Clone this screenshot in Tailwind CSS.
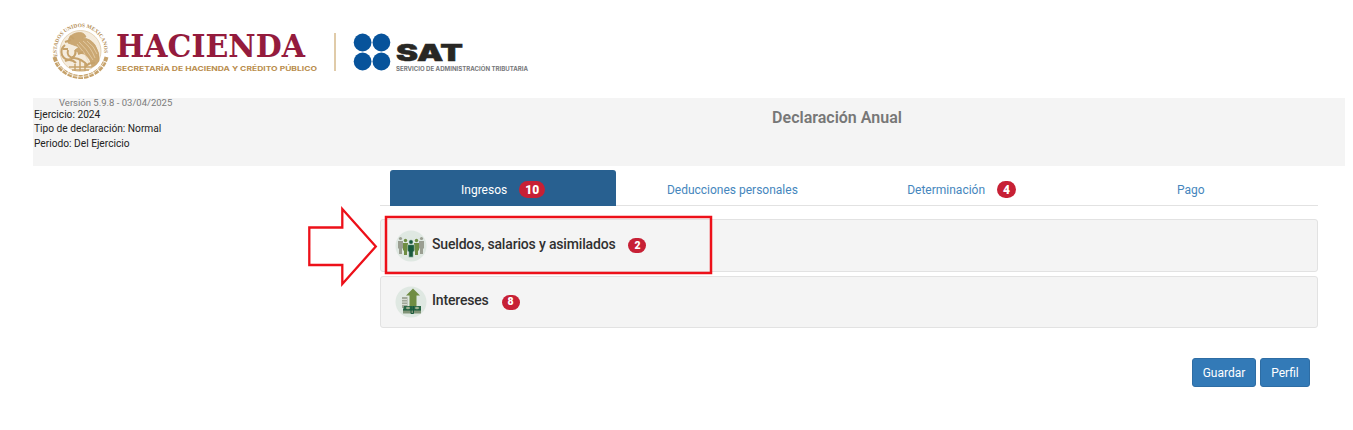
<!DOCTYPE html>
<html lang="es">
<head>
    <meta charset="UTF-8">
    <meta name="viewport" content="width=device-width, initial-scale=1.0">
    <title>Declaración Anual</title>
    <script src="https://cdn.jsdelivr.net/npm/@tailwindcss/browser@4"></script>
</head>
<body class="relative h-[430px] overflow-hidden bg-white font-[Roboto,sans-serif] text-[#333]">
    <!-- Logotipos -->
    <header class="flex h-[98px] pl-[48px]">
        <svg class="h-[98px] w-[500px]" viewBox="48 0 500 98">
            <defs>
                <path id="arco" d="M57.5 56.5A23.7 23.7 0 1 1 103.5 56.5"/>
            </defs>
            <!-- Escudo -->
            <g fill="none" stroke="#c6a26b">
                <text font-family="Liberation Serif, serif" font-weight="700" font-size="5.4" fill="#b58f58" stroke="none"><textPath href="#arco">ESTADOS UNIDOS MEXICANOS</textPath></text>
                <circle cx="80.5" cy="51" r="20.5" fill="#f5ecdd" stroke="#dcc59f" stroke-width="0.7"/>
                <path d="M54.5 57q3 11 12 16q14 8 28 0q9-5 12-16" stroke-width="4" stroke-dasharray="4.5 1"/>
                <path d="M56 61q9 15 24.5 16q15-1 24.5-16" stroke="#f8f0e3" stroke-width="0.8"/>
                <path d="M68 43q0-8 8-10q8-2 10 4l-4 1q8 0 13 7q5 8 4 16q-3 5-7 6q-1-9-8-13q-6 0-9-4l4-3z" fill="#cba873" stroke-width="0.8"/>
                <path d="M79 42q7 6 14 18M83 41q8 6 12 17M77 44q8 8 12 19M87 41q7 5 10 13" stroke="#ead6b4" stroke-width="0.7"/>
                <path d="M65 45q-5 4-3 10q3 6 9 4q6-4 4-9M68 50q-2 7 6 8t13 7M65 61q6-3 11 2M85 67q5-5 10-4M65 42l6-2M63 49h5M78 54l5-2M70 36l4 3" stroke-width="2"/>
                <path d="M69 67h23M72 70h17M80 60v11M75 64v7M85 64v7" stroke-width="1.5"/>
            </g>
            <text x="116" y="56.5" font-family="DejaVu Serif" font-weight="700" font-size="31" fill="#941b3d" textLength="189" lengthAdjust="spacingAndGlyphs">HACIENDA</text>
            <text x="116.5" y="71" font-family="Inter" font-weight="700" font-size="6.7" fill="#b98d4d" textLength="200.5" lengthAdjust="spacingAndGlyphs">SECRETARÍA DE HACIENDA Y CRÉDITO PÚBLICO</text>
            <path d="M335 33v38" stroke="#d6ba8c" stroke-width="1.5"/>
            <g fill="#07539b">
                <circle cx="362.6" cy="42.5" r="8.9"/>
                <circle cx="381.4" cy="42.5" r="8.9"/>
                <circle cx="362.6" cy="61.5" r="8.9"/>
                <circle cx="381.4" cy="61.5" r="8.9"/>
            </g>
            <text x="396" y="60.7" font-family="Inter" font-weight="900" font-size="22.5" fill="#282724" stroke="#282724" stroke-width="0.5" textLength="67" lengthAdjust="spacingAndGlyphs">SAT</text>
            <text x="396" y="70.8" font-family="Inter" font-weight="700" font-size="5.6" fill="#77777a" textLength="132" lengthAdjust="spacingAndGlyphs">SERVICIO DE ADMINISTRACIÓN TRIBUTARIA</text>
        </svg>
    </header>

    <!-- Datos de la declaración -->
    <section class="ml-[33px] flex h-[68px] w-[1312px] bg-[#f4f4f4]">
        <div class="w-[347px] pl-px text-[10.2px] leading-[14.7px] whitespace-nowrap text-[#222]">
            <p class="h-[9.6px] pl-[25px] text-[9.5px] leading-[9px] text-[#7b7b7b]">Versión 5.9.8 - 03/04/2025</p>
            <p>Ejercicio: 2024</p>
            <p>Tipo de declaración: Normal</p>
            <p>Periodo: Del Ejercicio</p>
        </div>
        <h1 class="w-[914px] pt-[10px] text-center text-[16px] leading-5 font-semibold text-[#777]">Declaración Anual</h1>
    </section>

    <main class="ml-[380px] w-[938px] pt-[4px]">
        <!-- Pestañas -->
        <nav class="grid h-[36px] grid-cols-4 gap-[3px] border-b border-[#e2e2e2] pr-[14px] pl-[10px] text-[12px] text-[#4586bd]">
            <a class="flex h-[36px] items-center justify-center rounded-t-[3px] bg-[#286090] pt-[3px] text-white">Ingresos<span class="ml-[12px] flex h-[17px] w-[26px] items-center justify-center rounded-full bg-[#c72035] text-[12px] font-black text-white">10</span></a>
            <a class="flex h-[36px] items-center justify-center pt-[3px]">Deducciones personales</a>
            <a class="flex h-[36px] items-center justify-center pt-[3px]">Determinación<span class="ml-[12px] flex h-[17px] w-[19px] items-center justify-center rounded-full bg-[#c72035] text-[12px] font-black text-white">4</span></a>
            <a class="flex h-[36px] items-center justify-center pt-[3px]">Pago</a>
        </nav>

        <!-- Secciones de ingresos -->
        <div class="mt-[13px] flex flex-col gap-[4px]">
            <div class="flex h-[53px] items-center rounded-[3px] border border-[#e2e2e2] bg-[#f4f4f4] pl-[14px]">
                <svg class="h-[32px] w-[32px]" viewBox="0 0 32 32">
                    <circle cx="16" cy="16" r="15.5" fill="#dfe8e2"/>
                    <g fill="#9a9e91">
                        <circle cx="5.5" cy="8.5" r="1.6"/><path d="M3 11h5v7l-1 1v5H4v-5l-1-1z"/>
                        <circle cx="26.5" cy="8.5" r="1.6"/><path d="M24 11h5v7l-1 1v5h-3v-5l-1-1z"/>
                    </g>
                    <g fill="#6f8d42">
                        <circle cx="10.5" cy="10.5" r="1.7"/><path d="M8 13h5v7l-1 1v4H9v-4l-1-1z"/>
                        <circle cx="21.5" cy="10.5" r="1.7"/><path d="M19 13h5v7l-1 1v4h-3v-4l-1-1z"/>
                    </g>
                    <g fill="#17593b" stroke="#dfe8e2" stroke-width="0.5">
                        <circle cx="16" cy="12" r="2.2"/><path d="M12.7 14.7h6.6v7h-1.1v5.5h-4.4v-5.5h-1.1z"/>
                    </g>
                </svg>
                <h2 class="mb-[3px] ml-[5px] text-[14px] font-medium tracking-[-0.17px] text-[#303030]">Sueldos, salarios y asimilados</h2>
                <span class="ml-[13px] flex h-[15px] w-[18px] items-center justify-center rounded-full bg-[#c72035] text-[10.5px] font-black text-white">2</span>
            </div>
            <div class="flex h-[52px] items-center rounded-[3px] border border-[#e2e2e2] bg-[#f4f4f4] pl-[14px]">
                <svg class="h-[32px] w-[32px]" viewBox="0 0 32 32">
                    <circle cx="16" cy="16" r="15.5" fill="#dfe8e2"/>
                    <path d="M18 2.5l7 7h-3.5v12h-7v-12H11z" fill="#6f8d42"/>
                    <path d="M7 11h5.5v11H7z" fill="#a1a99a"/>
                    <path d="M7 13.5h5M7 16h5M7 18.5h5" stroke="#eef1eb" stroke-width="0.7"/>
                    <path d="M9 20h17v4H8z" fill="#2b6847"/>
                    <path d="M8 24h18v3.5H8z" fill="#819477"/>
                    <path d="M8 24h18M16 20v7.5h2.5V20" fill="none" stroke="#17593b" stroke-width="1"/>
                    <ellipse cx="13" cy="22" rx="2" ry="1.2" fill="#9db08f"/>
                    <ellipse cx="22" cy="22" rx="2" ry="1.2" fill="#9db08f"/>
                </svg>
                <h2 class="mb-[3px] ml-[5px] text-[14px] font-medium tracking-[-0.17px] text-[#303030]">Intereses</h2>
                <span class="ml-[13px] flex h-[15px] w-[18px] items-center justify-center rounded-full bg-[#c72035] text-[10.5px] font-black text-white">8</span>
            </div>
        </div>

        <div class="mt-[30px] mr-[8px] flex justify-end gap-[4px] text-[12px] text-white">
            <button class="h-[29px] w-[64px] rounded-[3px] border border-[#2e6da4] bg-[#337ab7]">Guardar</button>
            <button class="h-[29px] w-[50px] rounded-[3px] border border-[#2e6da4] bg-[#337ab7]">Perfil</button>
        </div>
    </main>

    <!-- Flecha y recuadro de resaltado -->
    <svg class="pointer-events-none absolute top-[200px] left-[300px] h-[90px] w-[420px]" viewBox="300 200 420 90" fill="none" stroke="#ed1019">
        <path d="M309.3 227.5h33v-18.5l33.5 37.5-33.5 37.5v-19h-33z" stroke-width="2.3"/>
        <path d="M386 217h325v56h-325z" stroke-width="2.5"/>
    </svg>
</body>
</html>
